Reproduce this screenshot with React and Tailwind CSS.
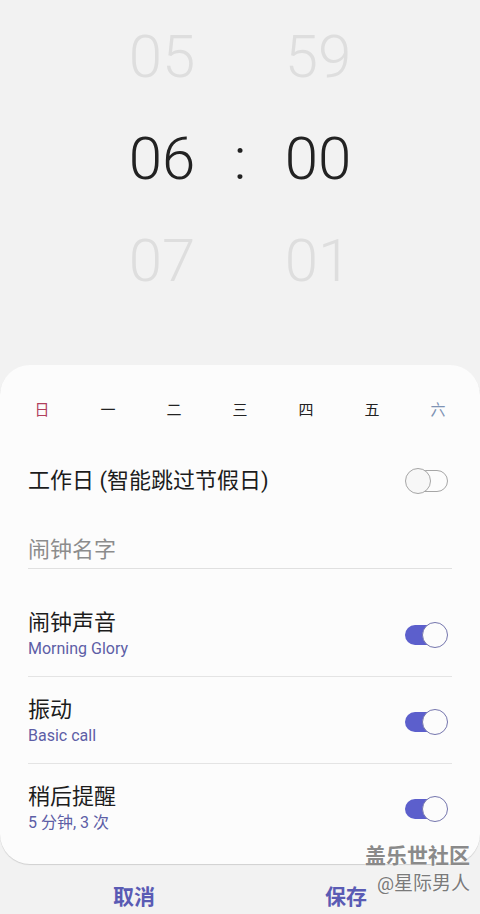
import React from "react";

const FONT = { fontFamily: "Roboto, 'Noto Sans CJK SC', sans-serif" };

function Toggle({ on }) {
  if (on) {
    return (
      <div className="relative w-[43px] h-[26px] shrink-0 mr-[4px]">
        <div className="absolute left-0 top-[3px] w-[40px] h-[20px] rounded-full bg-[#5c5fcc]" />
        <div className="absolute right-0 top-0 w-[26px] h-[26px] rounded-full bg-[#fcfcfc] border-[1.5px] border-[#7475ad]" />
      </div>
    );
  }
  return (
    <div className="relative w-[43px] h-[26px] shrink-0 mr-[4px]">
      <div className="absolute right-0 top-[2px] w-[40px] h-[22px] rounded-full border-[1.5px] border-[#a6a6a6]" />
      <div className="absolute left-0 top-0 w-[26px] h-[26px] rounded-full bg-[#f7f7f7] border-[1.5px] border-[#a6a6a6]" />
    </div>
  );
}

function Row({ title, sub, first, last }) {
  return (
    <div
      className={`flex items-center justify-between ${first ? "pt-[40px]" : "pt-[19px]"} pb-[15px] ${last ? "" : "border-b border-[#e4e4e4]"}`}
    >
      <div className="flex flex-col">
        <div className="text-[22px] leading-[28px] text-[#1c1c1c]">{title}</div>
        <div className="text-[16px] leading-[24px] text-[#5d5ea6]">{sub}</div>
      </div>
      <Toggle on />
    </div>
  );
}

export default function App() {
  const days = ["日", "一", "二", "三", "四", "五", "六"];
  return (
    <div
      className="relative w-[480px] h-[914px] bg-[#f2f2f2] overflow-hidden flex flex-col"
      style={FONT}
    >
      {/* time picker */}
      <div className="h-[365px] pt-[6px] flex justify-center">
        <div className="w-[100px] flex flex-col items-center">
          <div className="text-[60px] leading-[102px] font-light text-[#dedede]">05</div>
          <div className="text-[60px] leading-[102px] font-light text-[#222]">06</div>
          <div className="text-[60px] leading-[102px] font-light text-[#dedede]">07</div>
        </div>
        <div className="w-[56px] flex flex-col items-center pt-[102px]">
          <div className="text-[60px] leading-[102px] font-light text-[#222]">:</div>
        </div>
        <div className="w-[100px] flex flex-col items-center">
          <div className="text-[60px] leading-[102px] font-light text-[#dedede]">59</div>
          <div className="text-[60px] leading-[102px] font-light text-[#222]">00</div>
          <div className="text-[60px] leading-[102px] font-light text-[#dedede]">01</div>
        </div>
      </div>

      {/* card */}
      <div className="h-[499px] bg-[#fcfcfc] rounded-[30px] shadow-[0_1px_1px_rgba(0,0,0,0.14)] flex flex-col">
        <div className="h-[90px] grid grid-cols-7 items-center px-[9px]">
          {days.map((d, i) => (
            <div
              key={d}
              className={`text-center text-[15px] ${i === 0 ? "text-[#b03f5c]" : i === 6 ? "text-[#7f93b4]" : "text-[#222]"}`}
            >
              {d}
            </div>
          ))}
        </div>
        <div className="px-[28px] flex flex-col">
          <div className="h-[52px] flex items-center justify-between">
            <div className="text-[22px] leading-[28px] text-[#1c1c1c]">工作日 (智能跳过节假日)</div>
            <Toggle on={false} />
          </div>
          <div className="h-[62px] flex items-end pb-[3px] border-b border-[#e0e0e0]">
            <div className="text-[22px] leading-[30px] text-[#8c8c8c]">闹钟名字</div>
          </div>
          <Row title="闹钟声音" sub="Morning Glory" first />
          <Row title="振动" sub="Basic call" />
          <Row title="稍后提醒" sub="5 分钟, 3 次" last />
        </div>
      </div>

      {/* bottom bar */}
      <div className="grid grid-cols-2 px-[28px] pt-[19px]">
        <div className="text-center text-[21px] leading-[28px] font-bold text-[#5a5bb4]">取消</div>
        <div className="text-center text-[21px] leading-[28px] font-bold text-[#5a5bb4]">保存</div>
      </div>

      {/* watermark */}
      <div className="absolute right-[10px] top-[841px] flex flex-col items-end">
        <div className="text-[21px] leading-[30px] font-bold text-[#8a8a8a] [text-shadow:0_0_2px_#fff]">盖乐世社区</div>
        <div className="text-[19px] leading-[26px] text-[#7a7a7a] [text-shadow:0_0_2px_#fff]">@星际男人</div>
      </div>
    </div>
  );
}
